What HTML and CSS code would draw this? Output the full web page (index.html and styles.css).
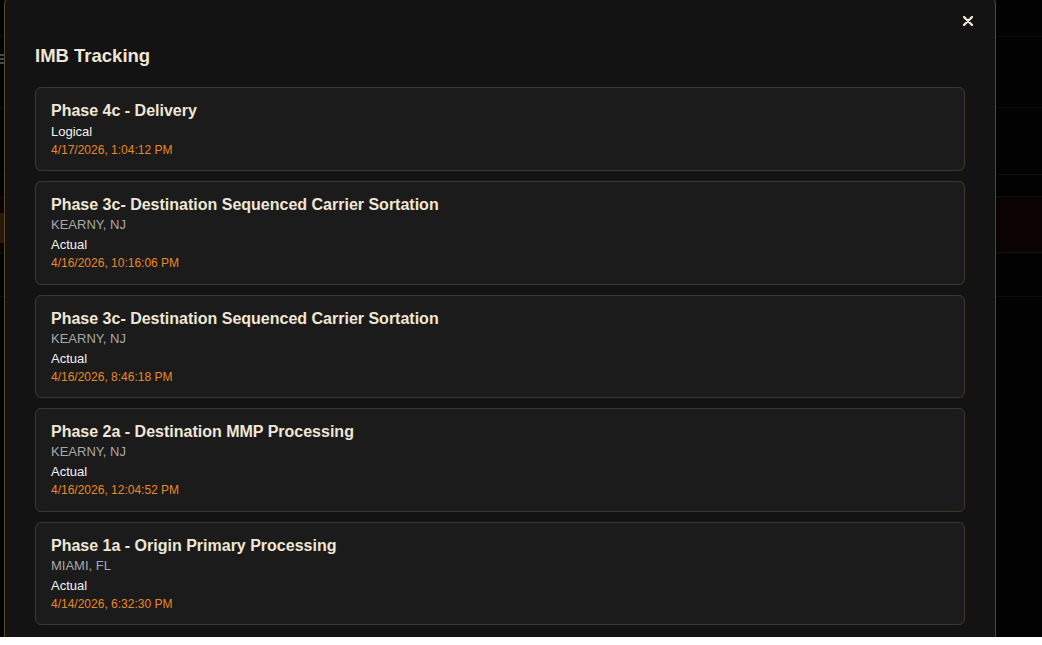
FILE: index.html
```html
<!DOCTYPE html>
<html lang="en">
<head>
<meta charset="utf-8">
<title>IMB Tracking</title>
<link rel="stylesheet" href="styles.css">
</head>
<body>
<div class="viewport">
  <div class="backdrop">
    <div class="bg-row r1"></div>
    <div class="bg-row r2"><span class="bg-menu"></span></div>
    <div class="bg-row r3"></div>
    <div class="bg-row r4"></div>
    <div class="bg-row r5"><span class="bg-chip"></span></div>
    <div class="bg-row r6"></div>
    <div class="bg-row r7"></div>
  </div>
  <div class="modal">
    <button class="close" aria-label="Close">
      <svg width="10" height="10" viewBox="0 0 10 10"><path d="M1 1 L9 9 M9 1 L1 9" stroke="#f0e6d6" stroke-width="2.4" stroke-linecap="round"/></svg>
    </button>
    <h2 class="modal-title">IMB Tracking</h2>
    <div class="events">
      <div class="event">
        <div class="ev-title">Phase 4c - Delivery</div>
        <div class="ev-type">Logical</div>
        <div class="ev-date">4/17/2026, 1:04:12 PM</div>
      </div>
      <div class="event">
        <div class="ev-title">Phase 3c- Destination Sequenced Carrier Sortation</div>
        <div class="ev-loc">KEARNY, NJ</div>
        <div class="ev-type">Actual</div>
        <div class="ev-date">4/16/2026, 10:16:06 PM</div>
      </div>
      <div class="event">
        <div class="ev-title">Phase 3c- Destination Sequenced Carrier Sortation</div>
        <div class="ev-loc">KEARNY, NJ</div>
        <div class="ev-type">Actual</div>
        <div class="ev-date">4/16/2026, 8:46:18 PM</div>
      </div>
      <div class="event">
        <div class="ev-title">Phase 2a - Destination MMP Processing</div>
        <div class="ev-loc">KEARNY, NJ</div>
        <div class="ev-type">Actual</div>
        <div class="ev-date">4/16/2026, 12:04:52 PM</div>
      </div>
      <div class="event">
        <div class="ev-title">Phase 1a - Origin Primary Processing</div>
        <div class="ev-loc">MIAMI, FL</div>
        <div class="ev-type">Actual</div>
        <div class="ev-date">4/14/2026, 6:32:30 PM</div>
      </div>
    </div>
  </div>
</div>
</body>
</html>
```

FILE: styles.css
```css
html, body {
  margin: 0;
  padding: 0;
  background: #ffffff;
  font-family: "Liberation Sans", Arial, sans-serif;
}

.viewport {
  position: relative;
  height: 637px;
  overflow: hidden;
  background: #030202;
}

.backdrop {
  display: flex;
  flex-direction: column;
}

.bg-row {
  border-bottom: 1px solid #100c0b;
  position: relative;
}
.r1 { height: 36px; }
.r2 { height: 70px; }
.r3 { height: 66px; }
.r4 { height: 21px; }
.r5 { height: 55px; background: #0a0302; border-bottom-color: #1a100e; }
.r6 { height: 43px; }
.r7 { height: 120px; border-bottom: none; }

.bg-menu {
  position: absolute;
  left: 0;
  top: 17px;
  width: 4px;
  height: 2px;
  background: #4a4a4a;
  box-shadow: 0 4px 0 #4a4a4a, 0 8px 0 #4a4a4a;
}
.bg-chip {
  position: absolute;
  left: 0;
  top: 16px;
  width: 6px;
  height: 30px;
  background: #2a190b;
}

.modal {
  position: absolute;
  left: 4px;
  top: -8px;
  width: 930px;
  min-height: 700px;
  padding: 53px 30px 30px;
  background: #131313;
  border: 1px solid #5a4828;
  border-radius: 12px;
}

.close {
  position: absolute;
  top: 22px;
  right: 21px;
  width: 12px;
  height: 12px;
  padding: 0;
  border: none;
  background: transparent;
  display: flex;
  align-items: center;
  justify-content: center;
}

.modal-title {
  margin: 0 0 20px;
  font-size: 18.5px;
  font-weight: bold;
  line-height: 20.7px;
  color: #f0e6d6;
}

.events {
  display: flex;
  flex-direction: column;
  gap: 10px;
}

.event {
  background: #1b1b1b;
  border: 1px solid #433827;
  border-radius: 6px;
  padding: 13px 16px 11.4px 15px;
}

.ev-title {
  font-size: 16px;
  font-weight: bold;
  line-height: 19.2px;
  color: #f0e6d6;
}

.ev-loc {
  margin-top: 2px;
  font-size: 13px;
  line-height: 18px;
  color: #a9a9a9;
}

.ev-type {
  margin-top: 2px;
  font-size: 13px;
  line-height: 18px;
  color: #f2f2f2;
}

.ev-title + .ev-type {
  margin-top: 2.8px;
}

.ev-date {
  font-size: 12px;
  line-height: 18px;
  color: #e8872a;
}
```
